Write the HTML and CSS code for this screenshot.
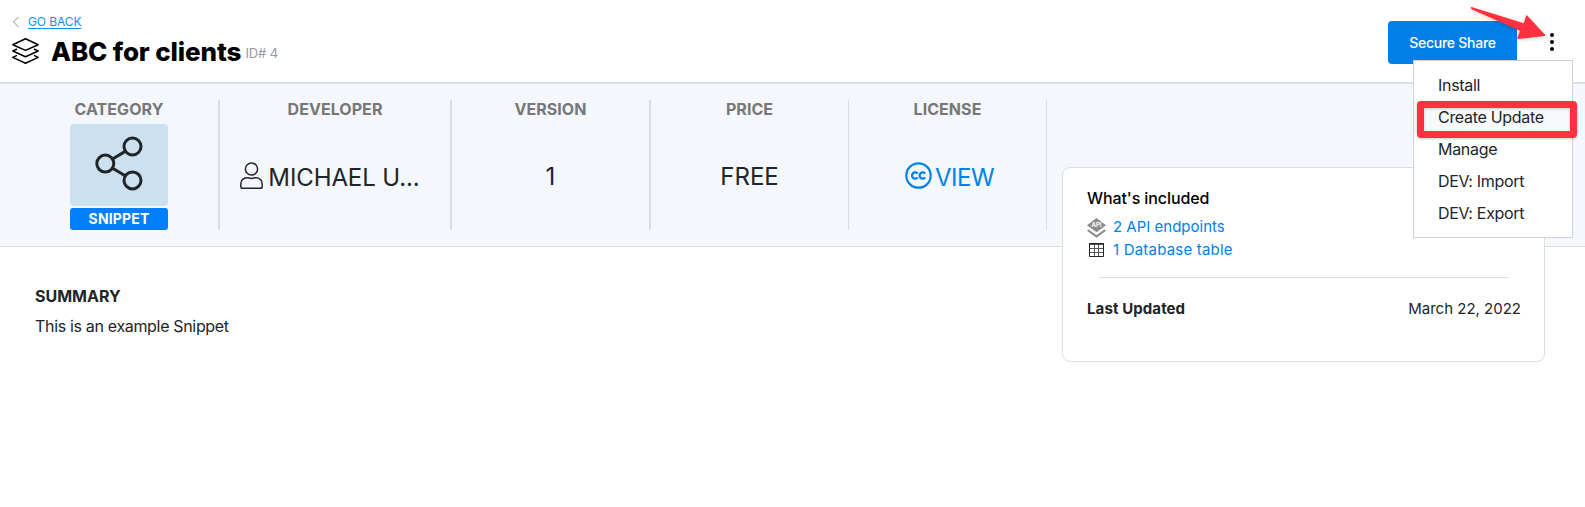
FILE: index.html
```html
<!DOCTYPE html>
<html lang="en">
<head>
<meta charset="utf-8">
<title>ABC for clients</title>
<link rel="stylesheet" href="styles.css">
</head>
<body>
<header class="header">
  <div class="heading">
    <div class="back">
      <svg width="8" height="12" viewBox="0 0 8 12"><path d="M6.5 1 1.5 6l5 5" fill="none" stroke="#888" stroke-width="1"/></svg>
      <a href="#">GO BACK</a>
    </div>
    <div class="title-row">
      <svg class="layers" width="28" height="28" viewBox="0 0 28 28" fill="none" stroke="#000" stroke-width="1.5" stroke-linejoin="round"><path d="M13.500 1.700 26.200 7.700 13.500 13.400.8 7.700Z"/><path d="M5 12 .8 14 13.500 19.700l12.700-5.700-4.200-2"/><path d="M5 18.400.8 20.400 13.500 26.200l12.700-5.800-4.200-2"/></svg>
      <h1>ABC for clients</h1>
      <span class="id">ID# 4</span>
    </div>
  </div>
  <div class="actions">
    <button class="share">Secure Share</button>
    <span class="kebab"><i></i><i></i><i></i></span>
    <ul class="menu">
      <li>Install</li>
      <li class="active">Create Update</li>
      <li>Manage</li>
      <li>DEV: Import</li>
      <li>DEV: Export</li>
    </ul>
    <div class="highlight"></div>
    <svg class="arrow" width="80" height="36" viewBox="0 0 80 36"><path d="M2.5 2 54.8 18.3 57 11Q57.4 9.8 58.4 10.7L76 29.8Q76.6 30.8 75.4 31L49.6 34Q48 34 48.5 32.6L51 25.7 3 4.4Q1 2.4 2.5 2Z" fill="#ff3040"/></svg>
  </div>
</header>
<section class="band">
  <div class="col category">
    <h2>CATEGORY</h2>
    <div class="tile">
      <svg width="50" height="56" viewBox="0 0 50 56" fill="none" stroke="#212529" stroke-width="3"><circle cx="11.3" cy="28.6" r="8.5"/><circle cx="38.5" cy="11.5" r="8.5"/><circle cx="38.5" cy="45.4" r="8.5"/><path d="m18.6 24 12.6-7.6M18.6 33.2l12.6 7.6"/></svg>
    </div>
    <div class="tag">SNIPPET</div>
  </div>
  <div class="col developer">
    <h2>DEVELOPER</h2>
    <div class="value">
      <svg width="23" height="27" viewBox="0 0 23 27" fill="none" stroke="#212529" stroke-width="1.5"><circle cx="11.5" cy="7" r="6.1"/><path d="M7.2 15.7C3.2 15.7.8 18.4.8 22.2v2.2q0 1.8 1.8 1.8h17.8q1.8 0 1.8-1.8v-2.2c0-3.8-2.4-6.5-6.4-6.5-1.6 0-2.2.7-4.3.7s-2.7-.7-4.3-.7Z"/></svg>
      <span>MICHAEL U...</span>
    </div>
  </div>
  <div class="col version"><h2>VERSION</h2><div class="value">1</div></div>
  <div class="col price"><h2>PRICE</h2><div class="value">FREE</div></div>
  <div class="col license">
    <h2>LICENSE</h2>
    <div class="value link">
      <svg width="27" height="27" viewBox="0 0 27 27" fill="none" stroke="#0082e6"><circle cx="13.5" cy="13.5" r="12.2" stroke-width="2.2"/><path d="M12.6 11.6a3.1 3.1 0 1 0 0 3.8M20.2 11.6a3.1 3.1 0 1 0 0 3.8" stroke-width="2.3"/></svg>
      <span>VIEW</span>
    </div>
  </div>
</section>
<main class="content">
  <section class="summary">
    <h3>SUMMARY</h3>
    <p>This is an example Snippet</p>
  </section>
  <aside class="card">
    <h4>What's included</h4>
    <div class="item">
      <svg width="19" height="20" viewBox="0 0 19 20"><path d="M9.5 0 19 7.2 9.5 14.2 0 7.2Z" fill="#8c8c8c"/><path d="m.6 12 8.900 6.4 8.900-6.4" fill="none" stroke="#8c8c8c" stroke-width="2"/><text x="9.5" y="9.4" text-anchor="middle" font-size="6" font-weight="700" fill="#fff">API</text></svg>
      <a>2 API endpoints</a>
    </div>
    <div class="item table">
      <svg width="19" height="14" viewBox="0 0 19 14"><path d="M2.5 5.500h14M2.5 9.500h14M7.5 1v12M11.5 1v12" stroke="#555" fill="none"/><path d="M2.5.5h14v13h-14Z" fill="none" stroke="#212529"/><path d="M2 1h15" stroke="#212529" stroke-width="1.500"/></svg>
      <a>1 Database table</a>
    </div>
    <hr>
    <div class="updated"><b>Last Updated</b><span>March 22, 2022</span></div>
  </aside>
</main>
</body>
</html>
```

FILE: styles.css
```css
* { box-sizing: border-box; margin: 0; padding: 0; }
body { font-family: Inter, "Liberation Sans", sans-serif; font-size: 16px; color: #212529; background: #fff; height: 507px; overflow: hidden; }
svg { display: block; flex: none; }
.header { position: relative; height: 84px; border-bottom: 2px solid #dadde1; display: flex; justify-content: space-between; padding-left: 12px; }
.heading { padding-top: 14px; }
.back { display: flex; align-items: center; gap: 8px; height: 16px; font-size: 12px; line-height: 16px; letter-spacing: -.08px; }
.back a { color: #0c92ee; text-decoration: underline; text-underline-offset: 2px; }
.title-row { display: flex; align-items: center; height: 42px; }
h1 { font-size: 26px; line-height: 32px; font-weight: 800; color: #000; margin: 2px 0 0 11px; letter-spacing: -.12px; }
.id { font-size: 13px; color: #999; margin: 4px 0 0 4px; letter-spacing: -.1px; }
.actions { display: flex; align-items: flex-start; padding: 21px 31px 0 0; }
.share { width: 129px; height: 43px; border: 0; border-radius: 4px 0 0 4px; background: #007fe9; color: #fff; font: 500 14px Inter, sans-serif; letter-spacing: -.25px; }
.kebab { display: flex; flex-direction: column; gap: 3px; margin: 12px 0 0 33px; }
.kebab i { width: 4px; height: 4px; border-radius: 50%; background: #000; }
.menu { position: absolute; z-index: 5; left: 1413px; top: 60px; width: 160px; height: 178px; background: #fff; border: 1px solid #cfd1d5; padding-top: 8px; list-style: none; letter-spacing: -.3px; }
.menu li { height: 32px; line-height: 32px; padding-left: 24px; }
.menu .active { background: #f8f9fb; }
.highlight { position: absolute; z-index: 6; left: 1417px; top: 101px; width: 160px; height: 37px; border: 7px solid #ff3040; border-radius: 4px; box-shadow: 0 1px 3px #0003, inset 0 1px 3px #0003; }
.arrow { position: absolute; z-index: 7; left: 1469px; top: 5px; filter: drop-shadow(0 1px 2px #0003); }
.band { height: 163px; background: #f4f7fc; border-bottom: 1px solid #dadde1; padding: 16px 0 16px 20px; display: flex; }
.col { border-right: 2px solid #dadde1; display: flex; flex-direction: column; align-items: center; width: 199px; }
.category { width: 200px; }
.developer { width: 232px; }
.price, .license { border-right-width: 1px; width: 198px; }
h2 { font-size: 16px; line-height: 19px; font-weight: 700; color: #777; letter-spacing: .05px; }
.tile { width: 98px; height: 82px; margin-top: 5px; padding-bottom: 5px; border-radius: 4px; background: #cbe1ef; display: flex; align-items: center; justify-content: center; }
.tag { width: 98px; height: 22px; margin-top: 2px; border-radius: 3px; background: #007ff8; color: #fff; font-size: 14px; line-height: 22px; font-weight: 700; text-align: center; letter-spacing: .15px; }
.value { font-size: 24px; line-height: 30px; margin-top: 43px; display: flex; align-items: center; gap: 5px; white-space: nowrap; }
.developer .value { margin: 43px 10px 0 0; letter-spacing: -.1px; }
.developer svg { margin-bottom: 4px; }
.license .value { margin: 43px 0 0 4px; gap: 3px; letter-spacing: -.5px; }
.license svg { margin-bottom: 4px; }
.link, .item a { color: #0082e6; }
.content { display: flex; justify-content: space-between; padding: 0 40px 0 35px; }
.summary { padding-top: 39px; }
h3 { font-size: 16px; line-height: 20px; font-weight: 700; }
.summary p { margin-top: 10px; line-height: 20px; letter-spacing: -.33px; }
.card { width: 483px; height: 195px; margin-top: -80px; border: 1px solid #dcdee2; border-radius: 8px; background: #fff; padding: 18px 23px 0 24px; position: relative; }
h4 { font-size: 16px; line-height: 24px; font-weight: 500; color: #000; margin-bottom: 5px; letter-spacing: -.1px; }
.item { display: flex; align-items: center; gap: 7px; height: 23px; font-size: 15px; }
.item svg { margin-top: 2px; }
.table { letter-spacing: .2px; }
.table svg { margin-top: 0; }
hr { border: 0; border-top: 1px solid #dadde1; margin: 16px 13px 20px 12px; }
.updated { display: flex; justify-content: space-between; font-size: 15px; line-height: 22px; }
.updated b { letter-spacing: .1px; }
```
